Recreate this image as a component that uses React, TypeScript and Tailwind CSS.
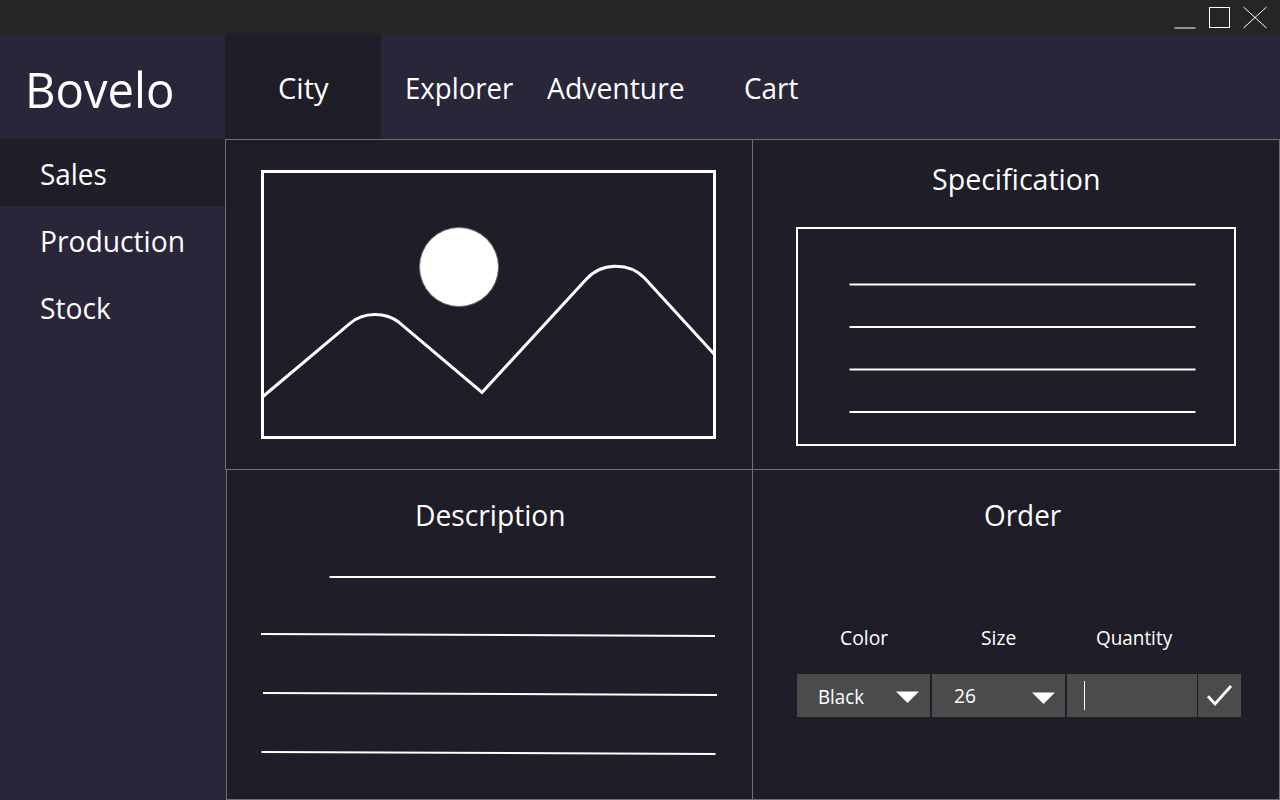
import type { ReactNode } from "react";

function TitleBar() {
  return (
    <header className="flex h-[35px] shrink-0 justify-end bg-[#252525]">
      <svg width="120" height="35" viewBox="0 0 120 35" fill="none" stroke="#fff" aria-hidden="true">
        <path d="M14.5 28H35.5" />
        <rect x="49.5" y="7.5" width="20" height="20" />
        <path d="M83.5 7L106.5 28M106.5 7L83.5 28" />
      </svg>
    </header>
  );
}

/** Text set slightly condensed, anchored at its left edge. */
function Label({ children, className = "scale-x-[0.94]" }: { children: ReactNode; className?: string }) {
  return <span className={`inline-block origin-left whitespace-nowrap ${className}`}>{children}</span>;
}

function PicturePanel() {
  return (
    <section className="h-[330px] border-t border-l border-[#707070] pt-[30px] pl-[35px]">
      <svg width="455" height="269" viewBox="261 170 455 269" fill="none" stroke="#fff" strokeWidth="3" aria-hidden="true">
        <rect x="262.5" y="171.5" width="452" height="266" />
        <circle cx="459" cy="267" r="39.5" fill="#fff" stroke="#707070" strokeWidth="1" />
        <path d="M263 396.500L350 323.300C363.500 311.700 385.500 311.700 399 322.300L482 392.500L586 279.500C601.500 262 629 262 644.500 278L714.500 354.500" />
      </svg>
    </section>
  );
}

function SpecificationPanel() {
  return (
    <section className="flex h-[330px] flex-col border-t border-r border-l border-[#707070] pl-[43px]">
      <h2 className="mt-[19px] ml-[136px] h-10 text-[30px] leading-10">
        <Label className="scale-x-[0.952]">Specification</Label>
      </h2>
      <div className="mt-[28px] h-[219px] w-[440px] border-2 border-white">
        <svg width="436" height="215" viewBox="798 229 436 215" stroke="#fff" strokeWidth="2" aria-hidden="true">
          <path d="M849.5 284.5H1195.5M849.5 327H1195.5M849.5 369.5H1195.5M849.5 412H1195.5" />
        </svg>
      </div>
    </section>
  );
}

function DescriptionPanel() {
  return (
    <section className="h-[331px] border-t border-[#707070] bg-[#292639] pl-px">
      <div className="flex h-[330px] flex-col border-b border-l border-[#707070] bg-[#1f1d27]">
        <h2 className="mt-[25px] ml-[188px] h-10 text-[30px] leading-10">
          <Label>Description</Label>
        </h2>
        <svg className="mt-[35px] ml-[33px]" width="460" height="190" viewBox="260 570 460 190" stroke="#fff" strokeWidth="2" aria-hidden="true">
          <path d="M329.5 577H715.5M261 634L715 636M263 693L717 695M261.5 752L715.5 754" />
        </svg>
      </div>
    </section>
  );
}

function Caret() {
  return (
    <svg width="24" height="12" viewBox="0 0 24 12" fill="#fff" aria-hidden="true">
      <path d="M0 .5H23L11.500 12Z" />
    </svg>
  );
}

function OrderPanel() {
  return (
    <section className="flex h-[331px] flex-col border border-[#707070] pl-[44px]">
      <h2 className="mt-[25px] ml-[187px] h-10 text-[30px] leading-10">
        <Label className="scale-x-[0.93]">Order</Label>
      </h2>
      <div className="mt-[89px] flex h-7 text-[20px] leading-7">
        <div className="w-[141px] pl-[43px]"><Label className="scale-x-[0.965]">Color</Label></div>
        <div className="w-[115px] pl-[43px]"><Label className="scale-x-[0.96]">Size</Label></div>
        <div className="pl-[43px]"><Label className="scale-x-[0.945]">Quantity</Label></div>
      </div>
      <div className="mt-[22px] flex h-[43px] text-[20px] leading-7">
        <div className="mr-[2px] flex w-[133px] bg-[#4b4b4b] pl-[21px]">
          <div className="mt-[9px] w-[78px]"><Label className="scale-x-[0.935]">Black</Label></div>
          <div className="mt-[17px]"><Caret /></div>
        </div>
        <div className="mr-[2px] flex w-[133px] bg-[#4b4b4b] pl-[22px]">
          <div className="mt-[8px] w-[78px]"><Label className="scale-x-[0.96]">26</Label></div>
          <div className="mt-[18px]"><Caret /></div>
        </div>
        <div className="mr-px w-[130px] bg-[#4b4b4b] pt-[7px] pl-[17px]">
          <div className="h-[29px] w-px bg-white" />
        </div>
        <svg className="bg-[#4b4b4b]" width="43" height="43" viewBox="0 0 43 43" fill="none" stroke="#fff" strokeWidth="2.8" aria-hidden="true">
          <path d="M10 22.200L17 30L33 12" />
        </svg>
      </div>
    </section>
  );
}

export default function App() {
  return (
    <div className="flex h-[800px] w-[1280px] flex-col overflow-hidden bg-[#292639] font-['Open_Sans','Noto_Sans',sans-serif] text-white">
      <TitleBar />
      <div className="flex h-[765px]">
        <aside className="w-[225px] shrink-0">
          <h1 className="h-[104px] pt-[21px] pl-[25px] text-[50px] leading-[66px]">
            <Label className="scale-x-[0.945]">Bovelo</Label>
          </h1>
          <nav className="text-[30px] leading-[69px]">
            <div className="h-[67px] bg-[#1f1d27] pl-[40px]"><Label className="scale-x-[0.93]">Sales</Label></div>
            <div className="h-[67px] pl-[40px]"><Label>Production</Label></div>
            <div className="h-[67px] pl-[40px]"><Label>Stock</Label></div>
          </nav>
        </aside>
        <main className="w-[1055px]">
          <nav className="flex h-[104px] text-[30px] leading-[105px]">
            <div className="w-[156px] bg-[#1f1d27] pl-[53px]"><Label className="scale-x-[0.97]">City</Label></div>
            <div className="w-[166px] pl-[24px]"><Label className="scale-x-[0.92]">Explorer</Label></div>
            <div className="w-[172px]"><Label className="scale-x-[0.945]">Adventure</Label></div>
            <div className="pl-[25px]"><Label className="scale-x-[0.93]">Cart</Label></div>
          </nav>
          <div className="grid grid-cols-[527px_528px] bg-[#1f1d27]">
            <PicturePanel />
            <SpecificationPanel />
            <DescriptionPanel />
            <OrderPanel />
          </div>
        </main>
      </div>
    </div>
  );
}
